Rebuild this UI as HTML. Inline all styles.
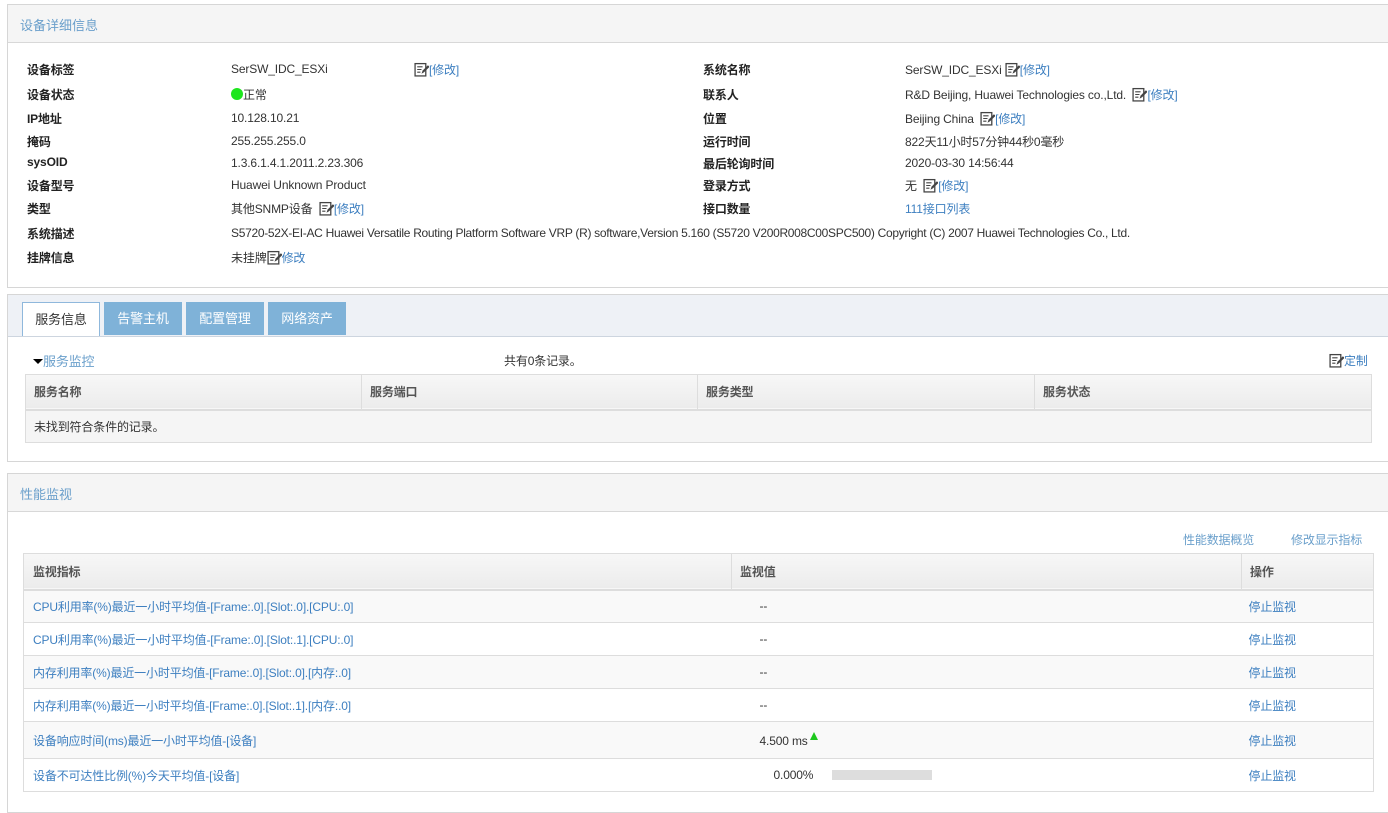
<!DOCTYPE html>
<html><head><meta charset="utf-8"><style>
*{margin:0;padding:0;box-sizing:border-box}
body{width:1388px;height:805px;background:#fff;font:12px "Liberation Sans","Noto Sans CJK SC",sans-serif;color:#333;position:relative;overflow:hidden}
.a{position:absolute;white-space:nowrap;letter-spacing:-0.15px}
.b{font-weight:bold;color:#222}
.l{color:#3d7fc0}
.panel{position:absolute;border:1px solid #d6d6d6;background:#fff}
.ph{position:absolute;left:0;right:0;top:0;background:#f5f5f5;border-bottom:1px solid #d8d8d8}
.ph span{position:absolute;left:12px;color:#6a9fcb;font-size:13px}
.ic{display:inline-block;width:15px;height:15px;vertical-align:-3px}
table{position:absolute;border-collapse:collapse;font-size:12px;letter-spacing:-0.15px}
td,th{text-align:left;font-weight:normal}
</style></head><body>
<svg width="0" height="0" style="position:absolute"><defs><symbol id="e" viewBox="0 0 14 14"><rect x="1" y="1.5" width="10" height="11.5" fill="#fff" stroke="#444" stroke-width="1.2"/><path d="M3 4.5h5M3 7h4M3 9.5h3" stroke="#444"/><path d="M7 11l1-3 5-5 1.5 1.5-5 5z" fill="#444"/></symbol></defs></svg>

<div class="panel" style="left:7px;top:4px;width:1390px;height:284px">
 <div class="ph" style="height:38px"><span style="top:10px">设备详细信息</span></div>
</div>
<div class="a b" style="left:27px;top:61px">设备标签</div><div class="a" style="left:231px;top:62px">SerSW_IDC_ESXi</div><div class="a" style="left:414px;top:61px"><svg class="ic"><use href="#e"/></svg><span class="l">[修改]</span></div>
<div class="a b" style="left:27px;top:86px">设备状态</div><div class="a" style="left:231px;top:86px"><span style="display:inline-block;width:12px;height:12px;border-radius:50%;background:#1ee61e;vertical-align:-1px"></span>正常</div>
<div class="a b" style="left:27px;top:110px">IP地址</div><div class="a" style="left:231px;top:111px">10.128.10.21</div>
<div class="a b" style="left:27px;top:133px">掩码</div><div class="a" style="left:231px;top:134px">255.255.255.0</div>
<div class="a b" style="left:27px;top:155px">sysOID</div><div class="a" style="left:231px;top:156px">1.3.6.1.4.1.2011.2.23.306</div>
<div class="a b" style="left:27px;top:177px">设备型号</div><div class="a" style="left:231px;top:178px">Huawei Unknown Product</div>
<div class="a b" style="left:27px;top:200px">类型</div><div class="a" style="left:231px;top:200px">其他SNMP设备 &nbsp;<svg class="ic"><use href="#e"/></svg><span class="l">[修改]</span></div>
<div class="a b" style="left:27px;top:225px">系统描述</div><div class="a" style="left:231px;top:226px;letter-spacing:-0.3px">S5720-52X-EI-AC Huawei Versatile Routing Platform Software VRP (R) software,Version 5.160 (S5720 V200R008C00SPC500) Copyright (C) 2007 Huawei Technologies Co., Ltd.</div>
<div class="a b" style="left:27px;top:249px">挂牌信息</div><div class="a" style="left:231px;top:249px">未挂牌<svg class="ic"><use href="#e"/></svg><span class="l">修改</span></div>

<div class="a b" style="left:703px;top:61px">系统名称</div><div class="a" style="left:905px;top:61px">SerSW_IDC_ESXi <svg class="ic"><use href="#e"/></svg><span class="l">[修改]</span></div>
<div class="a b" style="left:703px;top:86px">联系人</div><div class="a" style="left:905px;top:86px">R&amp;D Beijing, Huawei Technologies co.,Ltd. &nbsp;<svg class="ic"><use href="#e"/></svg><span class="l">[修改]</span></div>
<div class="a b" style="left:703px;top:110px">位置</div><div class="a" style="left:905px;top:110px">Beijing China &nbsp;<svg class="ic"><use href="#e"/></svg><span class="l">[修改]</span></div>
<div class="a b" style="left:703px;top:133px">运行时间</div><div class="a" style="left:905px;top:133px">822天11小时57分钟44秒0毫秒</div>
<div class="a b" style="left:703px;top:155px">最后轮询时间</div><div class="a" style="left:905px;top:156px">2020-03-30 14:56:44</div>
<div class="a b" style="left:703px;top:177px">登录方式</div><div class="a" style="left:905px;top:177px">无 &nbsp;<svg class="ic"><use href="#e"/></svg><span class="l">[修改]</span></div>
<div class="a b" style="left:703px;top:200px">接口数量</div><div class="a" style="left:905px;top:200px"><span class="l">111接口列表</span></div>

<div class="panel" style="left:7px;top:294px;width:1390px;height:168px">
 <div class="ph" style="height:42px;background:#eef1f6;border-bottom-color:#cdd5df"></div>
</div>
<div class="a" style="left:22px;top:302px;width:78px;height:34px;background:#fff;border:1px solid #8fb8dc;border-bottom:none;text-align:center;line-height:34px;font-size:13px;color:#333">服务信息</div>
<div class="a" style="left:104px;top:302px;width:78px;height:33px;background:#7fb2d8;color:#fff;text-align:center;line-height:34px;font-size:13px">告警主机</div>
<div class="a" style="left:186px;top:302px;width:78px;height:33px;background:#7fb2d8;color:#fff;text-align:center;line-height:34px;font-size:13px">配置管理</div>
<div class="a" style="left:268px;top:302px;width:78px;height:33px;background:#7fb2d8;color:#fff;text-align:center;line-height:34px;font-size:13px">网络资产</div>
<div class="a" style="left:33px;top:351px"><span style="display:inline-block;width:0;height:0;border-left:5px solid transparent;border-right:5px solid transparent;border-top:5px solid #000;vertical-align:2px"></span><span class="l" style="color:#6a9fcb;font-size:13px">服务监控</span></div>
<div class="a" style="left:504px;top:352px">共有0条记录。</div>
<div class="a" style="left:1329px;top:352px"><svg class="ic"><use href="#e"/></svg><span class="l">定制</span></div>
<table style="left:25px;top:374px;width:1347px;border:1px solid #ddd">
<tr style="height:35px;background:linear-gradient(#f7f7f7,#ececec);border-bottom:2px solid #ddd"><th style="width:336px;padding-left:8px;border-right:1px solid #ddd;color:#555;font-weight:bold">服务名称</th><th style="width:336px;padding-left:8px;border-right:1px solid #ddd;color:#555;font-weight:bold">服务端口</th><th style="width:337px;padding-left:8px;border-right:1px solid #ddd;color:#555;font-weight:bold">服务类型</th><th style="padding-left:8px;color:#555;font-weight:bold">服务状态</th></tr>
<tr style="height:33px;background:#f5f5f5"><td colspan="4" style="padding-left:8px">未找到符合条件的记录。</td></tr>
</table>

<div class="panel" style="left:7px;top:473px;width:1390px;height:340px">
 <div class="ph" style="height:38px"><span style="top:10px">性能监视</span></div>
</div>
<div class="a l" style="left:1183px;top:531px;color:#6a9fcb">性能数据概览</div>
<div class="a l" style="left:1291px;top:531px;color:#6a9fcb">修改显示指标</div>
<table style="left:23px;top:553px;width:1351px;border:1px solid #ddd">
<tr style="height:36px;background:linear-gradient(#f7f7f7,#ececec);border-bottom:2px solid #ddd"><th style="width:708px;padding-left:9px;border-right:1px solid #ddd;color:#555;font-weight:bold">监视指标</th><th style="width:510px;padding-left:8px;border-right:1px solid #ddd;color:#555;font-weight:bold">监视值</th><th style="padding-left:8px;color:#555;font-weight:bold">操作</th></tr>
<tr style="height:33px;background:#f9f9f9;border-bottom:1px solid #ddd"><td class="l" style="padding-left:9px">CPU利用率(%)最近一小时平均值-[Frame:.0].[Slot:.0].[CPU:.0]</td><td style="padding-left:28px">--</td><td class="l" style="padding-left:7px">停止监视</td></tr>
<tr style="height:33px;background:#fff;border-bottom:1px solid #ddd"><td class="l" style="padding-left:9px">CPU利用率(%)最近一小时平均值-[Frame:.0].[Slot:.1].[CPU:.0]</td><td style="padding-left:28px">--</td><td class="l" style="padding-left:7px">停止监视</td></tr>
<tr style="height:33px;background:#f9f9f9;border-bottom:1px solid #ddd"><td class="l" style="padding-left:9px">内存利用率(%)最近一小时平均值-[Frame:.0].[Slot:.0].[内存:.0]</td><td style="padding-left:28px">--</td><td class="l" style="padding-left:7px">停止监视</td></tr>
<tr style="height:33px;background:#fff;border-bottom:1px solid #ddd"><td class="l" style="padding-left:9px">内存利用率(%)最近一小时平均值-[Frame:.0].[Slot:.1].[内存:.0]</td><td style="padding-left:28px">--</td><td class="l" style="padding-left:7px">停止监视</td></tr>
<tr style="height:37px;background:#f9f9f9;border-bottom:1px solid #ddd"><td class="l" style="padding-left:9px">设备响应时间(ms)最近一小时平均值-[设备]</td><td style="padding-left:28px">4.500 ms<span style="display:inline-block;width:0;height:0;border-left:4px solid transparent;border-right:4px solid transparent;border-bottom:8px solid #1ec81e;margin-left:2px;vertical-align:5px"></span></td><td class="l" style="padding-left:7px">停止监视</td></tr>
<tr style="height:33px;background:#fff;border-bottom:1px solid #ddd"><td class="l" style="padding-left:9px">设备不可达性比例(%)今天平均值-[设备]</td><td style="padding-left:42px">0.000%<span style="display:inline-block;width:100px;height:10px;background:#ddd;margin-left:19px;vertical-align:-1px"></span></td><td class="l" style="padding-left:7px">停止监视</td></tr>
</table>
</body></html>
